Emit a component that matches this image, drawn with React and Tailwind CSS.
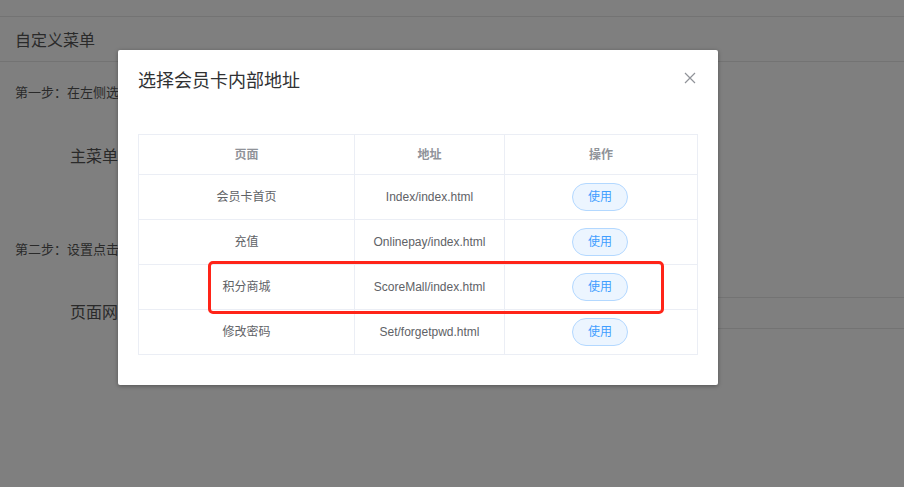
import React from 'react'

const rows = [
    { name: '会员卡首页', url: 'Index/index.html' },
    { name: '充值', url: 'Onlinepay/index.html' },
    { name: '积分商城', url: 'ScoreMall/index.html' },
    { name: '修改密码', url: 'Set/forgetpwd.html' },
]

const font = { fontFamily: '"Liberation Sans", "Noto Sans CJK SC", sans-serif' }

export default function App() {
    return (
        <div className="relative w-[904px] h-[487px] overflow-hidden bg-white text-[#555]" style={font}>
            {/* Page underneath */}
            <div className="h-[17px] border-b border-[#e6e6e6]"></div>
            <div className="h-[45px] flex items-center px-[15px] pt-[4px] text-[16px] border-b border-[#e6e6e6]">自定义菜单</div>
            <div className="px-[15px] pt-[21px] text-[13px]">第一步：在左侧选择菜单</div>
            <div className="pl-[70px] pt-[42px] text-[16px]">主菜单</div>
            <div className="px-[15px] pt-[71px] text-[13px]">第二步：设置点击后跳转的页面</div>
            <div className="flex items-center pl-[70px] mt-[38px] text-[16px]">
                <span className="w-[64px] whitespace-nowrap">页面网址</span>
                <div className="ml-[10px] flex-1 h-[32px] border-y border-[#e6e6e6]"></div>
            </div>

            {/* Mask */}
            <div className="absolute inset-0 bg-black/50"></div>

            {/* Dialog */}
            <div className="absolute left-[118px] top-[50px] w-[600px] bg-white rounded-[2px] shadow-[0_1px_4px_rgba(0,0,0,0.35)] px-[20px] pt-[20px] pb-[30px]">
                <div className="flex items-center justify-between h-[22px]">
                    <span className="text-[18px] text-[#303133]">选择会员卡内部地址</span>
                    <svg width="12" height="12" viewBox="0 0 12 12" className="mr-[2px] -mt-[6px]">
                        <path d="M1 1L11 11M11 1L1 11" stroke="#909399" strokeWidth="1.2" />
                    </svg>
                </div>
                <table className="mt-[42px] w-[559px] border-collapse text-[12px] table-fixed">
                    <colgroup>
                        <col className="w-[216px]" />
                        <col className="w-[150px]" />
                        <col className="w-[193px]" />
                    </colgroup>
                    <thead>
                        <tr className="h-[40px]">
                            <th className="border border-[#ebeef5] font-bold text-[#909399]">页面</th>
                            <th className="border border-[#ebeef5] font-bold text-[#909399]">地址</th>
                            <th className="border border-[#ebeef5] font-bold text-[#909399]">操作</th>
                        </tr>
                    </thead>
                    <tbody>
                        {rows.map((r) => (
                            <tr key={r.name} className="h-[45px]">
                                <td className="border border-[#ebeef5] text-center text-[#606266]">{r.name}</td>
                                <td className="border border-[#ebeef5] text-center text-[#606266]">{r.url}</td>
                                <td className="border border-[#ebeef5] text-center">
                                    <span className="inline-flex items-center justify-center w-[56px] h-[28px] rounded-full border border-[#b3d8ff] bg-[#ecf5ff] text-[#409eff] text-[12px] -ml-[2px]">使用</span>
                                </td>
                            </tr>
                        ))}
                    </tbody>
                </table>

                {/* Highlight annotation */}
                <div className="absolute left-[90px] top-[211px] w-[456px] h-[53px] border-[3px] border-[#ff2418] rounded-[5px]"></div>
            </div>
        </div>
    )
}
